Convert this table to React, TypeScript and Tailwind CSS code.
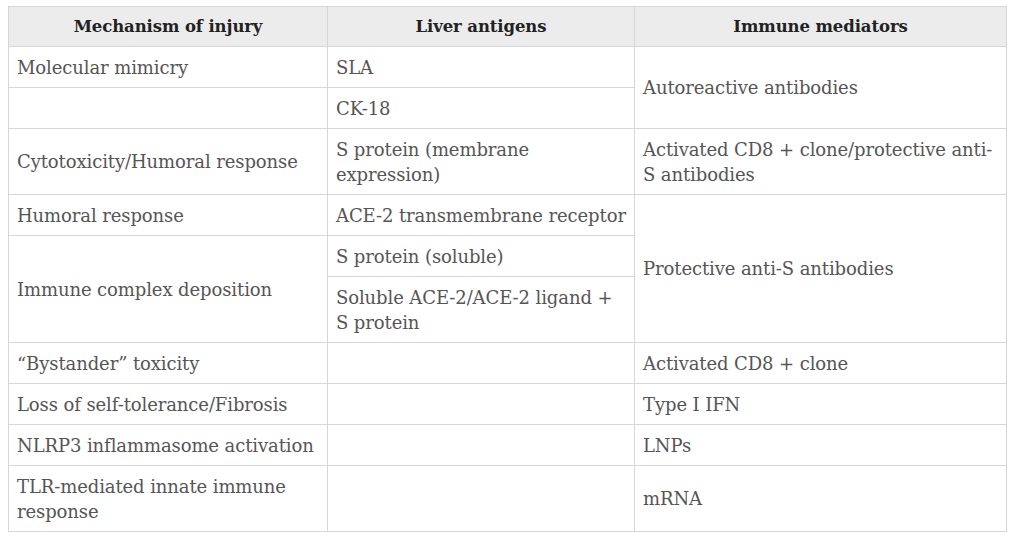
import { Fragment } from "react";

type Row = {
  a?: string[];
  aSpan?: number;
  b: string[];
  c?: string[];
  cSpan?: number;
};

const rows: Row[] = [
  { a: ["Molecular mimicry"], b: ["SLA"], c: ["Autoreactive antibodies"], cSpan: 2 },
  { a: [""], b: ["CK-18"] },
  {
    a: ["Cytotoxicity/Humoral response"],
    b: ["S protein (membrane", "expression)"],
    c: ["Activated CD8 + clone/protective anti-", "S antibodies"],
  },
  { a: ["Humoral response"], b: ["ACE-2 transmembrane receptor"], c: ["Protective anti-S antibodies"], cSpan: 3 },
  { a: ["Immune complex deposition"], aSpan: 2, b: ["S protein (soluble)"] },
  { b: ["Soluble ACE-2/ACE-2 ligand +", "S protein"] },
  { a: ["\u201CBystander\u201D toxicity"], b: [""], c: ["Activated CD8 + clone"] },
  { a: ["Loss of self-tolerance/Fibrosis"], b: [""], c: ["Type I IFN"] },
  { a: ["NLRP3 inflammasome activation"], b: [""], c: ["LNPs"] },
  { a: ["TLR-mediated innate immune", "response"], b: [""], c: ["mRNA"] },
];

const cell = "border border-[#d6d6d6] px-2 py-[7.5px] align-middle leading-[25px] whitespace-nowrap";

function Lines({ lines }: { lines: string[] }) {
  return (
    <>
      {lines.map((l, i) => (
        <Fragment key={i}>
          {i > 0 && <br />}
          {l}
        </Fragment>
      ))}
    </>
  );
}

export default function App() {
  return (
    <div className="bg-white w-[1013px] h-[539px] pt-[6px] pl-[8px] font-['DejaVu_Serif',serif] text-[18px] text-[#555] tracking-[-0.1px]">
      <table className="border-collapse table-fixed w-[998px]">
        <colgroup>
          <col className="w-[319px]" />
          <col className="w-[307px]" />
          <col className="w-[372px]" />
        </colgroup>
        <thead>
          <tr className="bg-[#ececec] text-[#222] font-bold text-[16.5px]">
            <th className="border border-[#d6d6d6] px-2 h-[40px] text-center leading-[24px]">Mechanism of injury</th>
            <th className="border border-[#d6d6d6] px-2 text-center leading-[24px]">Liver antigens</th>
            <th className="border border-[#d6d6d6] px-2 text-center leading-[24px]">Immune mediators</th>
          </tr>
        </thead>
        <tbody>
          {rows.map((r, i) => (
            <tr key={i}>
              {r.a && (
                <td className={cell} rowSpan={r.aSpan}>
                  <Lines lines={r.a} />
                </td>
              )}
              <td className={cell}>
                <Lines lines={r.b} />
              </td>
              {r.c && (
                <td className={cell} rowSpan={r.cSpan}>
                  <Lines lines={r.c} />
                </td>
              )}
            </tr>
          ))}
        </tbody>
      </table>
    </div>
  );
}
